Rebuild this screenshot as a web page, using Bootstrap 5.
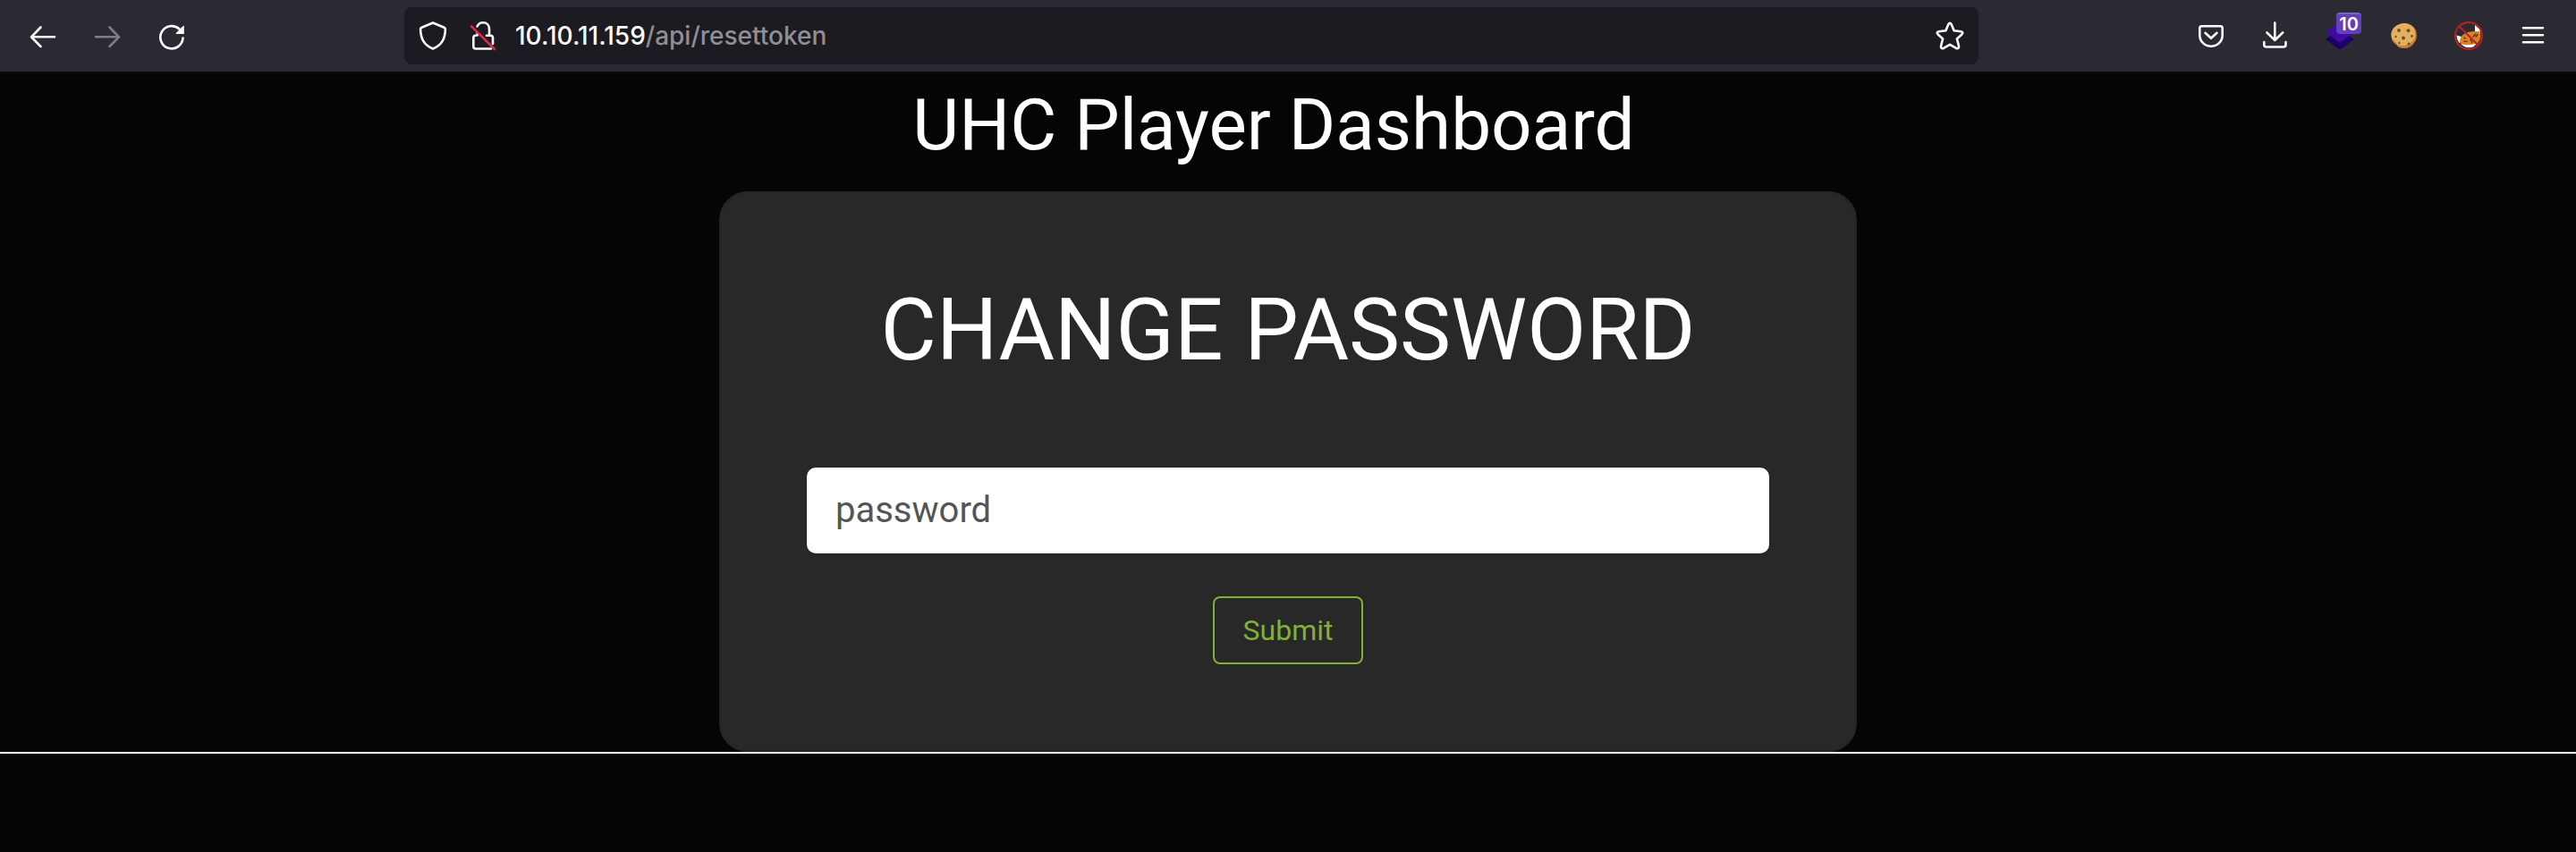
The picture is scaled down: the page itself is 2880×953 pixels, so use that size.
<!DOCTYPE html>
<html lang="en">
<head>
<meta charset="utf-8">
<meta name="viewport" content="width=device-width, initial-scale=1">
<title>UHC Player Dashboard</title>
<link rel="stylesheet" href="https://cdn.jsdelivr.net/npm/bootstrap@5.3.0/dist/css/bootstrap.min.css">
<style>
  :root { font-size: 32px; }
  body { background: #050505; color: #fff; font-family: Roboto, sans-serif; }
  .toolbar { background: #2b2a33; border-bottom: 2px solid #0c0c0d; padding: 8px 16px; }
  .toolbar svg { display: block; width: 32px; height: 32px; fill: none; stroke: #fbfbfe; stroke-width: 2.6; stroke-linecap: round; stroke-linejoin: round; flex: none; overflow: visible; }
  .tool { width: 64px; height: 64px; padding: 0 16px; border: 0; background: transparent; flex: none; }
  .tool:disabled { opacity: .4; }
  .tools { gap: 8px; }
  .spacer { flex: 57 1 0; }
  .urlbar { flex: 432 1 0; min-width: 0; height: 64px; padding: 0 16px; gap: 24px; border-radius: 8px; background: #1c1b22; font: 500 28px/40px Inter, sans-serif; }
  .plain { padding: 0; border: 0; background: transparent; }
  .address { color: #8f8f94; min-width: 0; margin-left: -4px; }
  .address b { color: #fbfbfe; font-weight: 500; }
  .count { position: absolute; top: 6px; right: 8px; width: 28px; height: 24px; border-radius: 4px; background: #6240b8; border-top: 2px solid #7d60c6; color: #fff; font: 600 20px/22px Inter, sans-serif; }
  .dashboard { border-bottom: 2px solid #fff; padding-top: 10px; }
  .dashboard .container { max-width: 2640px; }
  .page-title { font-size: 80px; font-weight: 400; margin: 0 32px 26px 0; }
  .panel { background: #282828; border: 2px solid #252525; border-radius: 32px; }
  .panel-title { font-size: 96px; font-weight: 400; margin-bottom: 96px; }
  .panel .form-control { border: 2px solid #fff; border-radius: 10px; padding: 16px 30px; color: #222; background: #fff; }
  .panel .form-control::placeholder { color: #555; opacity: 1; }
  .btn-lime { --bs-btn-color: #82b034; --bs-btn-border-color: #82b034; --bs-btn-hover-bg: #82b034; --bs-btn-hover-color: #fff; border-width: 2px; border-radius: 8px; padding: 12px 32px; }
</style>
</head>
<body>
<header class="toolbar d-flex align-items-center">
  <nav class="tools d-flex" aria-label="History">
    <button class="tool" aria-label="Back"><svg viewBox="0 0 32 32"><path d="M29 17.3H3.5M13.5 6.500 3 17.300 13.500 28"/></svg></button>
    <button class="tool" aria-label="Forward" disabled><svg viewBox="0 0 32 32"><path d="M3 17.300h25.500M18.500 6.500 29 17.300 18.500 28"/></svg></button>
    <button class="tool" aria-label="Reload"><svg viewBox="0 0 32 32"><path d="M28.500 18.500A12.600 12.600 0 1 1 24.500 8.500"/><path d="M29.200 5.500v8H21.200z" fill="#fbfbfe" stroke-width="1.200"/></svg></button>
  </nav>
  <div class="spacer"></div>
  <div class="urlbar d-flex align-items-center">
    <button class="plain" aria-label="Tracking protection"><svg viewBox="0 0 32 32"><path d="M16 1.500 28.500 6.800q1.500.7 1.400 2.300C29.500 19 26.500 26 16 30.500 5.500 26 2.500 19 2.100 9.100 2 7.500 2.500 7.200 3.500 6.800z"/></svg></button>
    <button class="plain" aria-label="Connection not secure"><svg viewBox="0 0 32 32"><path d="M9.500 5.500C11 2.500 13 1.300 16 1.300c4.300 0 7 3 7 7V15.500M9.700 15.500v-3M7.500 15.800Q5.300 16 5.300 18.500V28q0 2.500 2.500 2.500H25M20 15.800h4.500q2.500 0 2.500 2.500V25"/><path d="M3 5.300 29 31" stroke="#e22843"/></svg></button>
    <div class="address flex-grow-1 text-truncate"><b>10.10.11.159</b>/api/resettoken</div>
    <button class="plain" aria-label="Bookmark"><svg viewBox="0 0 32 32"><path d="M14.300 3.200Q16 .600 17.700 3.200L20.600 10.200 28.300 11.200Q31.600 12 29.300 14.500L23.900 19.500 26 27.500Q26.200 31 23 29.900L16 25.800 9 29.900Q5.800 31 6 27.500L8.100 19.500 2.700 14.500Q.4 12 3.700 11.200L11.400 10.200z"/></svg></button>
  </div>
  <div class="spacer"></div>
  <nav class="tools d-flex" aria-label="Extensions">
    <button class="tool" aria-label="Save to Pocket"><svg viewBox="0 0 32 32"><path d="M5.500 5.300h21q2.200 0 2.200 2.200v8a12.700 12.200 0 0 1-25.400 0v-8q0-2.200 2.200-2.200zM9.500 12.800l6.500 6 6.500-6"/></svg></button>
    <button class="tool" aria-label="Downloads"><svg viewBox="0 0 32 32"><path d="M15.300 1.500V20.500M6.500 12.500l8.800 8.500 8.800-8.500M3.300 23v3q0 2.500 2.500 2.500H25q2.500 0 2.500-2.500V23"/></svg></button>
    <button class="tool position-relative" aria-label="Wappalyzer"><svg viewBox="0 0 32 32"><g stroke="none"><path d="m16 8.500 16 11.500-16 11.800L0 20z" fill="#1c0069"/><path d="m16 .500 16 11.500-16 11.800L0 12z" fill="#400b9f"/></g></svg><span class="count">10</span></button>
    <button class="tool" aria-label="Cookie editor"><svg viewBox="0 0 32 32"><g stroke="none"><path d="M11 3q5-2 10 0 8 3 8.700 10 1 7-2.700 11-4 6-11 6-7 0-9-4-5-3-5.500-9Q1 11 4.500 7 7 4 11 3z" fill="#c9802f"/><path d="M11 3q5-2 10 0 6 2 7 9 .5 8-4 11-4 4.500-10 4-6 0-8-4-4.500-3-4.500-9Q2 9 5 6.500 7 4 11 3z" fill="#e3b063"/><g fill="#7a4c22"><circle cx="10" cy="10" r="2"/><circle cx="20.500" cy="10.300" r="2"/><circle cx="15" cy="18.500" r="2"/><circle cx="24.500" cy="16.500" r="1.400"/><circle cx="6.500" cy="17" r="1.200"/><circle cx="21" cy="25" r="1.500"/><circle cx="10.500" cy="24" r="1.200"/></g></g></svg></button>
    <button class="tool" aria-label="Proxy disabled"><svg viewBox="0 0 32 32"><g stroke="none"><path d="M2.500 15.500 8 17l1 5-3.500 2Q2.500 20 2.500 15.500zM23 4l5.500 5 .5 6-6-3z" fill="#fff"/><path d="M7 18q4-7 15.500-7L28 11q3 6-1 12-6 6-13 5-6-1-8-5z" fill="#db8128"/><path d="M7 25q6 2 11 1l7-1-4 3.500Q13 31 7 25z" fill="#fff"/></g><path d="m11 22 3 .5M21 17l3-3M11 18l1 1M18 20l2 4M24 17l2-2" stroke="#3b2920" stroke-width="1.200"/><circle cx="16" cy="16" r="15" stroke="#b6251e" stroke-width="2"/><path d="m5.500 5.500 21 21" stroke="#b6251e" stroke-width="2"/></svg></button>
    <button class="tool" aria-label="Menu"><svg viewBox="0 0 32 32"><path d="M5 7.300h22M5 15.300h22M5 23.300h22"/></svg></button>
  </nav>
</header>
<main class="dashboard">
  <div class="container">
    <h1 class="page-title text-center">UHC Player Dashboard</h1>
    <div class="row justify-content-center">
      <div class="col-12 col-lg-6">
        <form class="panel p-5 text-center">
          <h2 class="panel-title">CHANGE PASSWORD</h2>
          <input class="form-control form-control-lg mb-4" type="password" name="password" placeholder="password" aria-label="password">
          <button class="btn btn-lime d-block mx-auto" type="submit">Submit</button>
        </form>
      </div>
    </div>
  </div>
</main>
<script src="https://cdn.jsdelivr.net/npm/bootstrap@5.3.0/dist/js/bootstrap.bundle.min.js"></script>
</body>
</html>
